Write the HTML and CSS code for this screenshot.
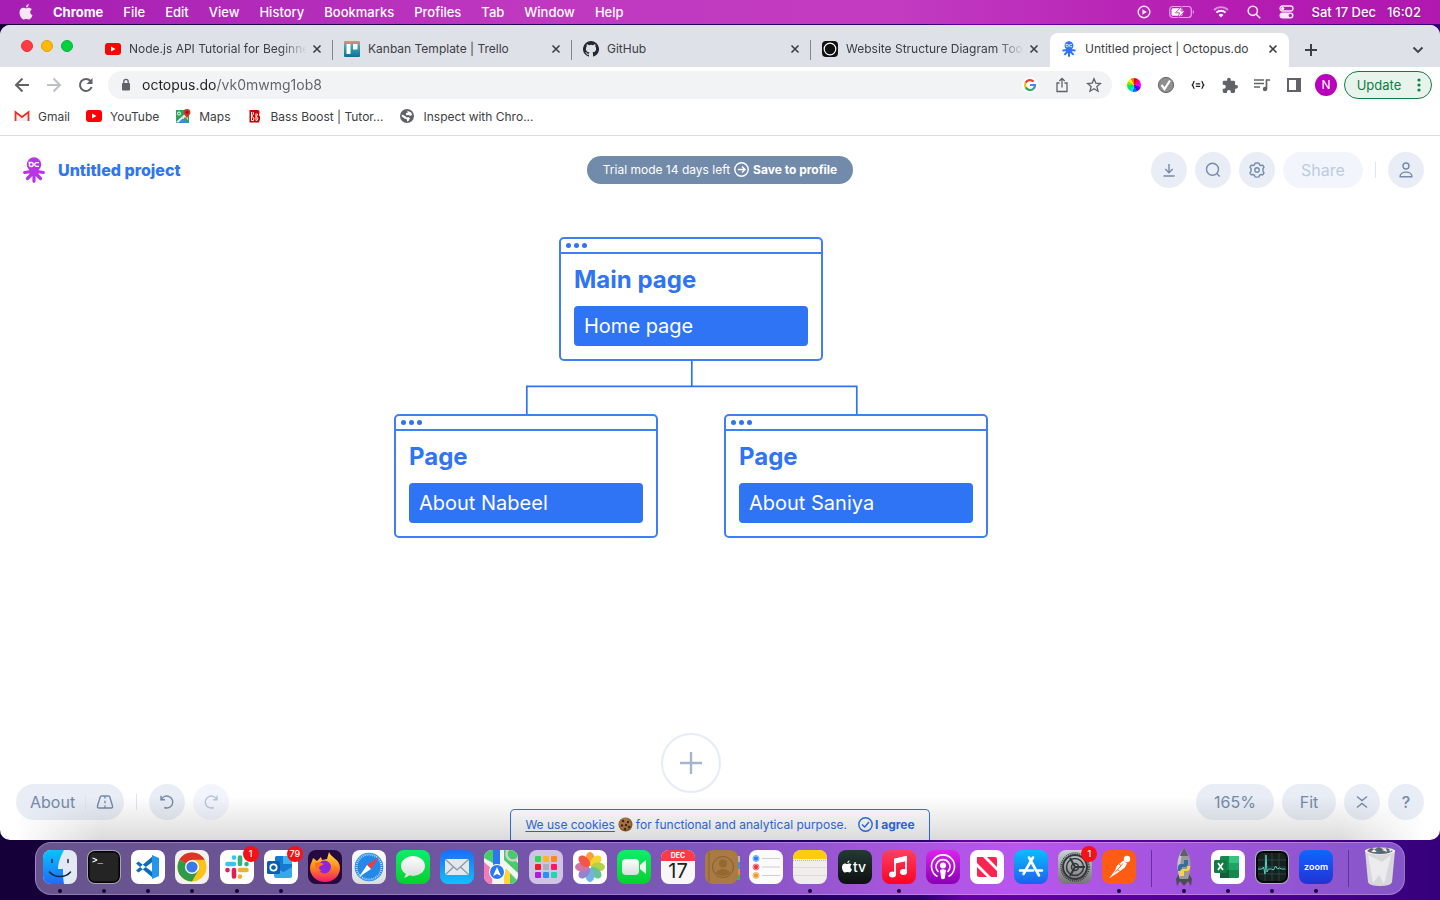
FILE: index.html
```html
<!DOCTYPE html>
<html lang="en">
<head>
<meta charset="utf-8">
<meta name="viewport" content="width=device-width, initial-scale=1">
<title>Untitled project | Octopus.do</title>
<link rel="stylesheet" href="styles.css">
</head>
<body>
<svg width="0" height="0" class="defs" aria-hidden="true">
  <defs>
    <linearGradient id="gGreen" x2="0" y2="1"><stop stop-color="#0bef6b"/><stop offset="1" stop-color="#06cf2c"/></linearGradient>
    <linearGradient id="gBlue" x2="0" y2="1"><stop stop-color="#1d6cf3"/><stop offset="1" stop-color="#12c0fb"/></linearGradient>
    <linearGradient id="gStore" x2="0" y2="1"><stop stop-color="#08bdfb"/><stop offset="1" stop-color="#1d60ee"/></linearGradient>
    <linearGradient id="gFinder" x2="0" y2="1"><stop stop-color="#06c4fc"/><stop offset="1" stop-color="#1f6bfa"/></linearGradient>
    <linearGradient id="gRed" x2="0" y2="1"><stop stop-color="#fb4060"/><stop offset="1" stop-color="#fb0324"/></linearGradient>
    <linearGradient id="gPod" x2="0" y2="1"><stop stop-color="#dd22ee"/><stop offset="1" stop-color="#8b00b4"/></linearGradient>
    <linearGradient id="gTv" x2="0" y2="1"><stop stop-color="#233a35"/><stop offset="1" stop-color="#0b1010"/></linearGradient>
    <linearGradient id="gGray" x2="0" y2="1"><stop stop-color="#c9d3d3"/><stop offset="1" stop-color="#747474"/></linearGradient>
    <linearGradient id="gLight" x2="0" y2="1"><stop stop-color="#ffffff"/><stop offset="1" stop-color="#d9dedb"/></linearGradient>
    <linearGradient id="gZoom" x2="0" y2="1"><stop stop-color="#0d67ff"/><stop offset="1" stop-color="#2232d4"/></linearGradient>
    <linearGradient id="gTrello" x2="0" y2="1"><stop stop-color="#f28a6c"/><stop offset=".35" stop-color="#3aa5b7"/><stop offset="1" stop-color="#0b6f95"/></linearGradient>
    <linearGradient id="gFox" x2="0" y2="1"><stop stop-color="#ffe03a"/><stop offset=".5" stop-color="#ff8a1c"/><stop offset="1" stop-color="#f5156c"/></linearGradient>
    <symbol id="close" viewBox="0 0 16 16"><path d="M4.500 4.500l7 7M11.500 4.500l-7 7" stroke="#3c4043" stroke-width="1.600" fill="none"/></symbol>
    <symbol id="youtube" viewBox="0 0 16 16"><rect y="2" width="16" height="12" rx="3" fill="#f00"/><path d="M6 5.500v5l4.500-2.500z" fill="#fff"/></symbol>
    <symbol id="octopus" viewBox="0 0 22 26">
      <circle cx="11" cy="7.500" r="7.200"/><path d="M6.500 11h9v8h-9z"/>
      <path d="M11 15v9.200M8 14.500l-6.300 1M14 14.500l6.300 1M9 17l-4.500 4.500M13 17l4.500 4.500" stroke="currentColor" stroke-width="3.200" stroke-linecap="round"/>
      <g fill="none" stroke="#fff" stroke-width="1.300"><circle cx="8.300" cy="7.500" r="2"/><path d="M16 5.700h-2.500a1.800 1.800 0 1 0 0 3.600H16M5.500 5.500h2"/></g>
    </symbol>
  </defs>
</svg>

<header class="menubar">
  <nav class="menus" aria-label="Menu bar">
    <button class="menu apple" aria-label="Apple menu"><svg width="14" height="16" viewBox="0 0 14 16" fill="#f7e6f7"><path d="M9.800 0c.2 1.600-1.100 3.400-2.800 3.500C6.800 1.900 8.200.3 9.800 0zM7 4.500c.8 0 1.600-.7 2.900-.7 1.200 0 2.300.6 3 1.500-2.500 1.500-2.100 4.900.6 5.900-.6 1.700-2 4.300-3.400 4.300-1.100 0-1.500-.6-2.800-.6s-1.700.6-2.700.6C2.800 15.500.5 11.600.5 8.500c0-3 1.900-4.700 3.800-4.700 1.200 0 2 .7 2.700.7z"/></svg></button>
    <button class="menu app">Chrome</button><button class="menu">File</button><button class="menu">Edit</button><button class="menu">View</button><button class="menu">History</button><button class="menu">Bookmarks</button><button class="menu">Profiles</button><button class="menu">Tab</button><button class="menu">Window</button><button class="menu">Help</button>
  </nav>
  <div class="status">
    <svg width="14" height="14" viewBox="0 0 14 14"><circle cx="7" cy="7" r="5.800" fill="none" stroke="#fbe9fb" stroke-width="1.400"/><path d="M5.400 4.300v5.400L9.800 7z" fill="#fbe9fb"/></svg>
    <svg width="26" height="14" viewBox="0 0 26 14"><rect x=".8" y="1.500" width="21.500" height="11" rx="3" fill="none" stroke="#e7a5e6" stroke-width="1.200"/><rect x="2.500" y="3.200" width="11" height="7.600" rx="1.500" fill="#fff"/><path d="M23.800 5v4c1.500-.6 1.500-3.400 0-4z" fill="#e7a5e6"/><path d="M13 .8L6.500 7.800h4L9 13.200l7-7.200h-4z" fill="#fff" stroke="#bd2cbb" stroke-width=".8"/></svg>
    <svg width="16" height="12" viewBox="0 0 16 12" fill="none" stroke-width="1.900"><path d="M1 4a10 10 0 0 1 14 0" stroke="#dc8fda"/><path d="M3.400 6.600a6.600 6.600 0 0 1 9.200 0" stroke="#fff"/><path d="M5.600 9a3.500 3.500 0 0 1 4.800 0L8 11.500z" fill="#fff"/></svg>
    <svg width="14" height="14" viewBox="0 0 14 14" fill="none" stroke="#fbe9fb" stroke-width="1.600"><circle cx="5.800" cy="5.800" r="4.600"/><path d="M9.200 9.200l4 4"/></svg>
    <svg width="15" height="14" viewBox="0 0 15 14"><rect x="1" y="1" width="13" height="5" rx="2.500" fill="none" stroke="#fbe9fb" stroke-width="1.300"/><circle cx="3.700" cy="3.500" r="1.600" fill="#fff"/><rect x=".5" y="7.500" width="14" height="6" rx="3" fill="#fbe9fb"/><circle cx="11.300" cy="10.500" r="1.700" fill="#b71fb6"/></svg>
    <time class="clock"><span>Sat 17 Dec</span><span>16:02</span></time>
  </div>
</header>

<main class="window">
  <div class="tabstrip">
    <div class="lights"><button class="light red" aria-label="Close window"></button><button class="light yellow" aria-label="Minimise"></button><button class="light green" aria-label="Zoom"></button></div>
    <div class="tab"><svg class="fav"><use href="#youtube"/></svg><span class="tab-title fade">Node.js API Tutorial for Beginne</span><button class="tab-close" aria-label="Close tab"><svg><use href="#close"/></svg></button></div>
    <div class="tab"><svg class="fav" viewBox="0 0 16 16"><rect width="16" height="16" rx="1" fill="url(#gTrello)"/><path d="M2.500 3h4v10h-4zM9 3h4.500v5.500H9z" fill="#fff"/></svg><span class="tab-title">Kanban Template | Trello</span><button class="tab-close" aria-label="Close tab"><svg><use href="#close"/></svg></button></div>
    <div class="tab"><svg class="fav" viewBox="0 0 16 16" fill="#24292f"><path d="M8 0a8 8 0 0 0-2.530 15.590c.4.070.55-.17.550-.380v-1.490c-2.230.48-2.690-.95-2.690-.95-.36-.92-.89-1.170-.89-1.170-.73-.5.050-.49.050-.49.810.06 1.230.83 1.230.83.720 1.230 1.870.870 2.330.660.070-.52.280-.87.510-1.070-1.780-.2-3.640-.89-3.640-3.950 0-.87.310-1.590.820-2.150-.08-.2-.36-1.020.080-2.120 0 0 .67-.21 2.200.820a7.600 7.600 0 0 1 4 0c1.530-1.040 2.200-.82 2.200-.82.440 1.100.160 1.920.080 2.120.510.560.820 1.270.820 2.150 0 3.070-1.870 3.750-3.650 3.950.290.250.540.730.540 1.480v2.200c0 .210.150.460.550.380A8 8 0 0 0 8 0z"/></svg><span class="tab-title">GitHub</span><button class="tab-close" aria-label="Close tab"><svg><use href="#close"/></svg></button></div>
    <div class="tab last"><svg class="fav" viewBox="0 0 16 16"><rect width="16" height="16" rx="4" fill="#111"/><circle cx="8" cy="8" r="5.800" fill="#111" stroke="#fff" stroke-width="1.200"/></svg><span class="tab-title fade">Website Structure Diagram Too</span><button class="tab-close" aria-label="Close tab"><svg><use href="#close"/></svg></button></div>
    <div class="tab active"><svg class="fav blue"><use href="#octopus"/></svg><span class="tab-title">Untitled project | Octopus.do</span><button class="tab-close" aria-label="Close tab"><svg><use href="#close"/></svg></button></div>
    <button class="newtab" aria-label="New tab"><svg width="12" height="12" viewBox="0 0 12 12"><path d="M6 0v12M0 6h12" stroke="#3c4043" stroke-width="2"/></svg></button>
    <button class="tabsearch" aria-label="Search tabs"><svg width="12" height="8" viewBox="0 0 12 8"><path d="M1.500 1.500L6 6l4.500-4.500" fill="none" stroke="#3c4043" stroke-width="1.800"/></svg></button>
  </div>

  <div class="toolbar">
    <button class="tool" aria-label="Back"><svg width="16" height="16" viewBox="0 0 16 16" fill="none" stroke="#5f6368" stroke-width="2"><path d="M15 8H2M8.500 1.500L2 8l6.500 6.500"/></svg></button>
    <button class="tool" aria-label="Forward"><svg width="16" height="16" viewBox="0 0 16 16" fill="none" stroke="#bdc1c6" stroke-width="2"><path d="M1 8h13M7.500 1.500L14 8l-6.500 6.500"/></svg></button>
    <button class="tool" aria-label="Reload"><svg width="16" height="16" viewBox="0 0 16 16"><path d="M13.600 10A6 6 0 1 1 12.500 4" fill="none" stroke="#5f6368" stroke-width="2"/><path d="M14.500 1v6h-6z" fill="#5f6368"/></svg></button>
    <div class="omnibox">
      <svg width="12" height="14" viewBox="0 0 12 14"><rect x="2" y="5" width="8" height="7.500" rx="1" fill="#5f6368"/><path d="M3.800 6V3.500a2.200 2.200 0 0 1 4.400 0V6" fill="none" stroke="#5f6368" stroke-width="1.300"/></svg>
      <input class="url" type="text" aria-label="Address" value="octopus.do/vk0mwmg1ob8">
      <button class="tool" aria-label="Google"><svg width="16" height="16" viewBox="0 0 16 16"><circle cx="8" cy="8" r="8" fill="#fff"/><g fill="none" stroke-width="2.200"><path d="M11.600 4.600A5 5 0 0 0 3.600 5.700" stroke="#ea4335"/><path d="M3.600 5.700a5 5 0 0 0 0 4.600" stroke="#fbbc05"/><path d="M3.600 10.300a5 5 0 0 0 7.700 1.500" stroke="#34a853"/><path d="M11.300 11.800A5 5 0 0 0 13 8H8" stroke="#4285f4"/></g></svg></button>
      <button class="tool" aria-label="Share page"><svg width="14" height="16" viewBox="0 0 14 16" fill="none" stroke="#5f6368" stroke-width="1.300"><path d="M4.500 6H2v8.500h10V6H9.500M7 10.500v-9M4.300 4L7 1.300 9.700 4"/></svg></button>
      <button class="tool" aria-label="Bookmark"><svg width="16" height="16" viewBox="0 0 16 16" fill="none" stroke="#5f6368" stroke-width="1.300"><path d="M8 1.800l1.800 4.300 4.700.4-3.600 3.100 1.100 4.600L8 11.700l-4 2.500 1.100-4.600-3.600-3.100 4.700-.4z"/></svg></button>
    </div>
    <button class="tool" aria-label="Color picker"><span class="wheel"></span></button>
    <button class="tool" aria-label="Checker"><svg width="18" height="18" viewBox="0 0 18 18"><circle cx="9" cy="9" r="7.600" fill="#8f8f8f" stroke="#666"/><path d="M4.500 9l3 4L13 4.500" fill="none" stroke="#fff" stroke-width="2.200"/></svg></button>
    <button class="tool" aria-label="JSON viewer"><svg width="14" height="10" viewBox="0 0 14 10" fill="none" stroke="#222" stroke-width="1.300"><path d="M3.500 1.500C1.500 1.500 3.200 5 .7 5c2.500 0 .8 3.500 2.800 3.500M10.500 1.500c2 0 .3 3.500 2.800 3.500-2.500 0-.8 3.500-2.800 3.500M4.800 3.800h4.400M4.800 6.300h4.400"/></svg></button>
    <button class="tool" aria-label="Extensions"><svg width="16" height="16" viewBox="1 0 22 22" fill="#5f6368"><path d="M20.500 11H19V7c0-1.100-.9-2-2-2h-4V3.500a2.500 2.500 0 0 0-5 0V5H4c-1.100 0-2 .9-2 2v3.800h1.500a2.700 2.700 0 0 1 0 5.400H2V20c0 1.100.9 2 2 2h3.800v-1.500a2.700 2.700 0 0 1 5.400 0V22H17c1.100 0 2-.9 2-2v-4h1.500a2.500 2.500 0 0 0 0-5z"/></svg></button>
    <button class="tool" aria-label="Media"><svg width="16" height="14" viewBox="0 0 16 14" fill="none" stroke="#5f6368" stroke-width="1.700"><path d="M0 2h10M0 5.500h10M0 9h6M12.500 11V2H16"/><circle cx="11" cy="11" r="2.200" fill="#5f6368" stroke="none"/></svg></button>
    <button class="tool" aria-label="Side panel"><svg width="14" height="14" viewBox="0 0 14 14"><path d="M1 1h12v12H1z" fill="none" stroke="#5f6368" stroke-width="2"/><path d="M9 1h4v12H9z" fill="#5f6368"/></svg></button>
    <button class="tool" aria-label="Profile"><span class="avatar">N</span></button>
    <button class="update">Update<svg width="4" height="14" viewBox="0 0 4 14" fill="#0b8043"><circle cx="2" cy="2" r="1.600"/><circle cx="2" cy="7" r="1.600"/><circle cx="2" cy="12" r="1.600"/></svg></button>
  </div>

  <nav class="bookmarks" aria-label="Bookmarks">
    <a href="#"><svg viewBox="0 0 16 16"><path d="M2 4v9h12V4L8 9z" fill="#eee"/><path d="M1.500 13V4L8 9l6.500-5v9" fill="none" stroke="#e0352b" stroke-width="1.800"/></svg>Gmail</a>
    <a href="#"><svg><use href="#youtube"/></svg>YouTube</a>
    <a href="#"><svg viewBox="0 0 16 16"><rect x="1" y="2" width="13" height="13" fill="#2da45a"/><path d="M1 14L13 3v9l-3-3-5 6z" fill="#e9e9e9"/><path d="M3 15l4.500-4.500L12 15z" fill="#4285f4"/><path d="M12 1a3.400 3.400 0 0 0-3.400 3.400C8.600 7 11.400 7.500 12 11c.6-3.500 3.400-4 3.400-6.600A3.400 3.400 0 0 0 12 1z" fill="#db2d27"/><circle cx="12" cy="4.300" r="1.200" fill="#7c1410"/><circle cx="4" cy="5.500" r="1.500" fill="none" stroke="#fff"/></svg>Maps</a>
    <a href="#"><svg viewBox="0 0 16 16"><path d="M2.500 2h8q2.500 0 2 3l-.5 2q1.500 2 1 4l-1 3.500h-9.500z" fill="#c00"/><path d="M4.500 4v8.500h2q2-2.500-2-4.500 3.500-1.500 1.500-4M9 5.500v7h1q2.500-2.500-1-4 3-1.500 1-3" fill="none" stroke="#fff" stroke-width="1"/></svg>Bass Boost | Tutor...</a>
    <a href="#"><svg viewBox="0 0 16 16"><circle cx="8" cy="8" r="7" fill="#5f6368"/><path d="M2.800 6.500l3.400 1.500 1.300 1.500 2-.5 1.500 1.500-1.500 2.500-1.500.5v-2l-2.500-1-2.700-2zM8 2.800l4 1.500 1.200 2.700-2 .7-2-.7-2 .3L7 5l2-.5z" fill="#fff"/></svg>Inspect with Chro...</a>
  </nav>

  <section class="page">
    <header class="page-head">
      <div class="brand"><svg width="22" height="26" class="logo"><use href="#octopus"/></svg><h1>Untitled project</h1></div>
      <button class="trial"><span>Trial mode 14 days left</span><svg width="15" height="15" viewBox="0 0 15 15" fill="none" stroke="#fff" stroke-width="1.400"><circle cx="7.500" cy="7.500" r="6.700"/><path d="M3.800 7.500h7M8 4.500l3 3-3 3"/></svg><b>Save to profile</b></button>
      <div class="actions">
        <button class="pill round" aria-label="Download"><svg viewBox="0 0 16 16"><path d="M8 2v8.500M4.300 7L8 10.700 11.700 7M2.500 14h11"/></svg></button>
        <button class="pill round" aria-label="Search"><svg viewBox="0 0 16 16"><circle cx="7.500" cy="7.300" r="6"/><path d="M12 11.800l2.700 2.700"/></svg></button>
        <button class="pill round" aria-label="Settings"><svg viewBox="0 0 16 16"><path d="M8 .9l1.900.2.700 1.800 1.300.6 1.800-.4 1.300 2-1 1.600v2.600l1 1.600-1.300 2-1.800-.4-1.300.6-.7 1.800-1.900.2-1.900-.2-.7-1.800-1.300-.6-1.800.4-1.300-2 1-1.600V6.700L1 5.100l1.300-2 1.800.4 1.300-.6.700-1.800z" stroke-linejoin="round"/><circle cx="8" cy="8" r="2.200"/></svg></button>
        <button class="pill share" disabled>Share</button>
        <span class="rule"></span>
        <button class="pill round" aria-label="Account"><svg viewBox="0 0 16 16"><circle cx="8" cy="4" r="3"/><path d="M2 14.800c0-6.200 12-6.200 12 0z" stroke-linejoin="round"/></svg></button>
      </div>
    </header>

    <div class="canvas">
      <div class="diagram">
        <svg class="links" width="594" height="301" viewBox="0 0 594 301" fill="none" stroke="#2f74f4" stroke-width="1.700"><path d="M297.800 124v25.500M132.800 177v-27.700h330V177"/></svg>
        <article class="node root"><div class="node-bar"><i></i><i></i><i></i></div><h2>Main page</h2><p>Home page</p></article>
        <article class="node left"><div class="node-bar"><i></i><i></i><i></i></div><h2>Page</h2><p>About Nabeel</p></article>
        <article class="node right"><div class="node-bar"><i></i><i></i><i></i></div><h2>Page</h2><p>About Saniya</p></article>
      </div>
    </div>

    <footer class="page-foot">
      <div class="group">
        <div class="pill about"><button>About</button><span class="rule"></span><button aria-label="Roadmap"><svg viewBox="0 0 18 16"><path d="M5.500 2h7q1 0 1.300 1l2.700 9q.4 2-1.500 2H3q-1.900 0-1.500-2l2.700-9q.3-1 1.300-1zM9 2v2.500M9 6.800v2.500M9 11.500V14"/></svg></button></div>
        <span class="rule"></span>
        <button class="pill round" aria-label="Undo"><svg viewBox="0 0 16 16"><path d="M2 1.800v4h4M2.300 5.600a6 6 0 1 1 3 7.900"/></svg></button>
        <button class="pill round faint" aria-label="Redo" disabled><svg viewBox="0 0 16 16"><path d="M14 1.800v4h-4M13.700 5.600a6 6 0 1 0-3 7.900"/></svg></button>
      </div>
      <div class="group">
        <button class="pill zoom">165%</button>
        <button class="pill fit">Fit</button>
        <button class="pill round" aria-label="Collapse"><svg viewBox="0 0 16 16"><path d="M3 2.500l5 4 5-4M3 13.500l5-4 5 4"/></svg></button>
        <button class="pill round help" aria-label="Help">?</button>
      </div>
    </footer>
    <button class="add" aria-label="Add page"><svg width="22" height="22" viewBox="0 0 22 22"><path d="M11 0v22M0 11h22" stroke="#a3b5cf" stroke-width="2.400"/></svg></button>
    <div class="cookies">
      <a href="#">We use cookies</a>
      <svg width="15" height="15" viewBox="0 0 15 15"><circle cx="7.500" cy="7.500" r="7" fill="#8f5c30"/><circle cx="7" cy="7" r="6" fill="#b47e4a"/><g fill="#4c2a14"><circle cx="5" cy="4" r="1.300"/><circle cx="10" cy="5" r="1.200"/><circle cx="4" cy="8.500" r="1.200"/><circle cx="8" cy="8" r="1.200"/><circle cx="11" cy="10" r="1.300"/><circle cx="7" cy="12" r="1.200"/></g></svg>
      <span>for functional and analytical purpose.</span>
      <button class="agree"><svg width="15" height="15" viewBox="0 0 15 15" fill="none" stroke="#2f6fe6" stroke-width="1.400"><circle cx="7.500" cy="7.500" r="6.700"/><path d="M4 7.500L6.700 10 11 5"/></svg>I agree</button>
    </div>
  </section>
</main>

<nav class="dock" aria-label="Dock">
  <a class="slot run" href="#" aria-label="Finder"><svg viewBox="0 0 34 34"><rect width="34" height="34" rx="8" fill="#e3e9f2"/><path d="M8 0h13c-3 6-6 12-6 19h5c0 5 0 10 1 15H8a8 8 0 0 1-8-8V8a8 8 0 0 1 8-8z" fill="url(#gFinder)"/><path d="M9 9.500v3M25 9.500v3M6.500 22c5 6 16 6 21 0" stroke="#14283f" stroke-width="1.500" fill="none" stroke-linecap="round"/></svg></a>
  <a class="slot run" href="#" aria-label="Terminal"><svg viewBox="0 0 34 34"><rect width="34" height="34" rx="8" fill="#a5a5b1"/><rect x="1" y="1" width="32" height="32" rx="7" fill="#000"/><rect x="2.500" y="2.500" width="29" height="29" rx="5" fill="#242424"/><text x="5" y="13" class="t-mono">&gt;_</text></svg></a>
  <a class="slot run" href="#" aria-label="VS Code"><svg viewBox="0 0 34 34"><rect width="34" height="34" rx="8" fill="#fff"/><path d="M5 13.500l2.500-2L22 22.500v5.500zM5 20.500l2.500 2L22 11.500V6z" fill="#0b6cb8"/><path d="M21 5l7 3v18l-7 3z" fill="#2196ec"/></svg></a>
  <a class="slot run" href="#" aria-label="Chrome"><svg viewBox="0 0 34 34"><rect width="34" height="34" rx="8" fill="#f3f0f0"/><circle cx="17" cy="17" r="14.500" fill="#fbc217"/><path d="M17 17L4.400 9.800A14.500 14.500 0 0 1 29.600 9.800H17z" fill="#dc3427"/><path d="M17 17l6.300 3.600L17 31.500A14.500 14.500 0 0 1 4.400 9.800z" fill="#2e9b48"/><circle cx="17" cy="17" r="7" fill="#fff"/><circle cx="17" cy="17" r="5.600" fill="#3b79e8"/></svg></a>
  <a class="slot run" href="#" aria-label="Slack"><svg viewBox="0 0 34 34"><rect width="34" height="34" rx="8" fill="#fff"/><g stroke-width="4.600" stroke-linecap="round"><path d="M14 7.500v.1M7.500 14H14" stroke="#36c5f0"/><path d="M20 7.500V14M26.500 14v.1" stroke="#2eb67d"/><path d="M20 20h6.500M20 26.500v.1" stroke="#ecb22e"/><path d="M14 20v6.500M7.500 20v.1" stroke="#e01e5a"/></g></svg><b class="badge">1</b></a>
  <a class="slot run" href="#" aria-label="Outlook"><svg viewBox="0 0 34 34"><rect width="34" height="34" rx="8" fill="#fff"/><rect x="11" y="6" width="17" height="21" rx="1.500" fill="#1479d3"/><path d="M19 6h9v8h-9z" fill="#3bb5f0"/><path d="M10 17l9.500 5 8.500-5v9q0 2-2 2H12q-2 0-2-2z" fill="#36a9ea"/><rect x="3" y="11" width="13" height="13" rx="1.500" fill="#0b5db4"/><circle cx="9.500" cy="17.500" r="3.200" fill="none" stroke="#fff" stroke-width="1.700"/></svg><b class="badge">79</b></a>
  <a class="slot" href="#" aria-label="Firefox"><svg viewBox="0 0 34 34"><rect width="34" height="34" rx="8" fill="#25093f"/><path d="M5 8l4 3 4-4 1 3 5-1 2-7c2 6 11 7 11 16A15 14 0 0 1 2 18C2 14 4 12 5 8z" fill="url(#gFox)"/><circle cx="16.500" cy="17" r="6.500" fill="#8e26dc"/><path d="M7 13c4-2 7 0 9 1l-5 3c0 2 1 3 3 4-4 1-8-3-7-8z" fill="#ff711b"/></svg></a>
  <a class="slot" href="#" aria-label="Safari"><svg viewBox="0 0 34 34"><rect width="34" height="34" rx="8" fill="url(#gLight)"/><circle cx="17" cy="17" r="14.300" fill="#2388e8"/><circle cx="17" cy="17" r="12.500" fill="none" stroke="#b7dcfb" stroke-width="2" stroke-dasharray="1 1"/><path d="M27 7L15 15l4 4z" fill="#f23b3a"/><path d="M7 27l8-12 4 4z" fill="#fff"/></svg></a>
  <a class="slot" href="#" aria-label="Messages"><svg viewBox="0 0 34 34"><rect width="34" height="34" rx="8" fill="url(#gGreen)"/><ellipse cx="17" cy="16" rx="12" ry="10" fill="url(#gLight)"/><path d="M10 22q0 4-2 5.500 4-.5 6-3z" fill="#e2e8e5"/></svg></a>
  <a class="slot" href="#" aria-label="Mail"><svg viewBox="0 0 34 34"><rect width="34" height="34" rx="8" fill="url(#gBlue)"/><rect x="5" y="9" width="24" height="16" rx="2" fill="#e4e8ed"/><path d="M5.500 9.500L17 20 28.500 9.500M5.500 24.500l8-7.500M28.500 24.500l-8-7.500" fill="none" stroke="#8996a5" stroke-width="1.200"/></svg></a>
  <a class="slot" href="#" aria-label="Maps"><svg viewBox="0 0 34 34" class="clip"><rect width="34" height="34" fill="#f4f4f2"/><path d="M0 0h9v13L0 8zM21 0l13 13v10L20 10V0z" fill="#46cc68"/><path d="M22 19l12 12v3H22z" fill="#51cd6d"/><path d="M0 12l9 8-1 14H0z" fill="#f27db6"/><path d="M22 19l4 4v11h-6V22z" fill="#fed638"/><path d="M9 0h7v18H9z" fill="#2879f3"/><circle cx="29" cy="4" r="6.500" fill="#46cc68" stroke="#cbd2ce" stroke-width="2.500"/><circle cx="13" cy="22" r="8" fill="#fff"/><circle cx="13" cy="22" r="7" fill="#2879f3"/><path d="M13 17l4 9-4-2-4 2z" fill="#fff"/></svg></a>
  <a class="slot" href="#" aria-label="Launchpad"><svg viewBox="0 0 34 34"><rect width="34" height="34" rx="8" fill="#cfc4e4"/><g><rect x="6" y="6" width="6" height="6" rx="1" fill="#2edb50"/><rect x="14" y="6" width="6" height="6" rx="1" fill="#fdb51e"/><rect x="22" y="6" width="6" height="6" rx="1" fill="#fc8a14"/><rect x="6" y="14" width="6" height="6" rx="1" fill="#e91d2c"/><rect x="14" y="14" width="6" height="6" rx="1" fill="#aab0b8"/><rect x="22" y="14" width="6" height="6" rx="1" fill="#fa1765"/><rect x="6" y="22" width="6" height="6" rx="1" fill="#b11ae0"/><rect x="14" y="22" width="6" height="6" rx="1" fill="#2395f5"/><rect x="22" y="22" width="6" height="6" rx="1" fill="#1ed8b0"/></g></svg></a>
  <a class="slot" href="#" aria-label="Photos"><svg viewBox="0 0 34 34"><rect width="34" height="34" rx="8" fill="#fff"/><g opacity=".9"><ellipse cx="17" cy="9" rx="4.500" ry="7" fill="#fb9620"/><ellipse cx="17" cy="9" rx="4.500" ry="7" fill="#f3d21c" transform="rotate(45 17 17)"/><ellipse cx="17" cy="9" rx="4.500" ry="7" fill="#a9cd36" transform="rotate(90 17 17)"/><ellipse cx="17" cy="9" rx="4.500" ry="7" fill="#59bd87" transform="rotate(135 17 17)"/><ellipse cx="17" cy="9" rx="4.500" ry="7" fill="#61ace3" transform="rotate(180 17 17)"/><ellipse cx="17" cy="9" rx="4.500" ry="7" fill="#8977c5" transform="rotate(225 17 17)"/><ellipse cx="17" cy="9" rx="4.500" ry="7" fill="#cc659f" transform="rotate(270 17 17)"/><ellipse cx="17" cy="9" rx="4.500" ry="7" fill="#f34334" transform="rotate(315 17 17)"/></g></svg></a>
  <a class="slot" href="#" aria-label="FaceTime"><svg viewBox="0 0 34 34"><rect width="34" height="34" rx="8" fill="url(#gGreen)"/><rect x="5" y="9" width="17" height="16" rx="4" fill="url(#gLight)"/><path d="M23 15l6-5v14l-6-5z" fill="#e9f5ed"/></svg></a>
  <a class="slot" href="#" aria-label="Calendar"><svg viewBox="0 0 34 34"><rect width="34" height="34" rx="8" fill="#f7f7f7"/><path d="M8 0h18a8 8 0 0 1 8 8v3H0V8a8 8 0 0 1 8-8z" fill="#fb3b45"/><text x="17" y="8" class="t-month">DEC</text><text x="17" y="28" class="t-day">17</text></svg></a>
  <a class="slot" href="#" aria-label="Contacts"><svg viewBox="0 0 34 34"><path d="M27 6h8v6h-8z" fill="#b7b7b7"/><path d="M27 12h8v7h-8z" fill="#3a94d0"/><path d="M27 19h8v6h-8z" fill="#e98c2c"/><path d="M27 25h8v5h-8z" fill="#39b45b"/><rect width="33" height="34" rx="8" fill="#a97a43"/><path d="M4 2v30" stroke="#8d632f"/><circle cx="18" cy="17" r="10.500" fill="none" stroke="#85602f"/><circle cx="18" cy="13.500" r="4" fill="#93692f"/><path d="M10.500 23q7.500-8 15 0-7 6-15 0z" fill="#93692f"/></svg></a>
  <a class="slot" href="#" aria-label="Reminders"><svg viewBox="0 0 34 34"><rect width="34" height="34" rx="8" fill="#fbfbfb"/><path d="M13 8.500h18M13 17h18M13 25.500h18" stroke="#cfcfcf"/><g stroke-width=".7" fill="none"><circle cx="7" cy="8.500" r="3" stroke="#2582f6"/><circle cx="7" cy="17" r="3" stroke="#f1323f"/><circle cx="7" cy="25.500" r="3" stroke="#f39427"/></g><circle cx="7" cy="8.500" r="2.200" fill="#2582f6"/><circle cx="7" cy="17" r="2.200" fill="#f1323f"/><circle cx="7" cy="25.500" r="2.200" fill="#f39427"/></svg></a>
  <a class="slot run" href="#" aria-label="Notes"><svg viewBox="0 0 34 34"><rect width="34" height="34" rx="8" fill="#f0eeec"/><path d="M8 0h18a8 8 0 0 1 8 8v1H0V8a8 8 0 0 1 8-8z" fill="#fdcc11"/><path d="M0 10.500h34" stroke="#a9a5a0" stroke-width=".8" stroke-dasharray="1 1"/><path d="M0 17.500h34M0 25.500h34" stroke="#dedad6"/></svg></a>
  <a class="slot" href="#" aria-label="TV"><svg viewBox="0 0 34 34"><rect width="34" height="34" rx="8" fill="url(#gTv)"/><path d="M11.500 10.500c.1 1.300-1 2.600-2.300 2.600 0-1.300 1-2.400 2.300-2.600zM9 14c.7 0 1.300-.5 2.300-.5 1 0 1.800.4 2.400 1.100-2 1.300-1.700 3.900.3 4.800-.5 1.200-1.500 3.100-2.700 3.100-.9 0-1.200-.4-2.100-.4s-1.300.4-2.200.4C5.500 22.500 4 19.500 4 17.200c0-2.300 1.400-3.700 3-3.700.9 0 1.300.5 2 .5z" fill="#fff"/><text x="15" y="22" class="t-tv">tv</text></svg></a>
  <a class="slot run" href="#" aria-label="Music"><svg viewBox="0 0 34 34"><rect width="34" height="34" rx="8" fill="url(#gRed)"/><path d="M13 24V9.500L24 7v14.500" fill="none" stroke="#fff" stroke-width="1.800"/><path d="M12.100 8.700L24.900 6v5L12.100 13.700z" fill="#fff"/><ellipse cx="10.500" cy="24.500" rx="3.500" ry="3" fill="#fff"/><ellipse cx="21.500" cy="22" rx="3.500" ry="3" fill="#fff"/></svg></a>
  <a class="slot" href="#" aria-label="Podcasts"><svg viewBox="0 0 34 34"><rect width="34" height="34" rx="8" fill="url(#gPod)"/><g fill="none" stroke="#fff" stroke-width="1.600"><path d="M11.500 26.500A11.500 11.500 0 1 1 22.500 26.500"/><path d="M12.500 22A7 7 0 1 1 21.500 22"/></g><circle cx="17" cy="15.500" r="3" fill="#fff"/><path d="M14 20q3-1.500 6 0l-1.200 8.500q-1.800 1.500-3.600 0z" fill="#fff"/></svg></a>
  <a class="slot" href="#" aria-label="News"><svg viewBox="0 0 34 34"><rect width="34" height="34" rx="8" fill="#fff"/><path d="M7 7h6l14 14v6h-6L7 13zM17 7h8q2 0 2 2v8zM7 17v8q0 2 2 2h8z" fill="#f7254f"/></svg></a>
  <a class="slot" href="#" aria-label="App Store"><svg viewBox="0 0 34 34"><rect width="34" height="34" rx="8" fill="url(#gStore)"/><path d="M19 7.500L9.500 24M15 7.500L25 25.500M6 20.500h13M23 20.500h5" stroke="#fff" stroke-width="2.600" stroke-linecap="round"/></svg></a>
  <a class="slot" href="#" aria-label="Settings"><svg viewBox="0 0 34 34"><rect width="34" height="34" rx="8" fill="url(#gGray)"/><g fill="none" stroke="#34373a"><circle cx="17" cy="17" r="14" stroke-width="1.500" stroke-dasharray="1 1"/><circle cx="17" cy="17" r="12" stroke-width="2"/><circle cx="17" cy="17" r="8.500" stroke-width="1.500"/><path d="M17 17h10M17 17l-5-9M17 17l-5 9" stroke-width="2"/><circle cx="17" cy="17" r="3.500" stroke-width="1.500"/></g></svg><b class="badge">1</b></a>
  <a class="slot run" href="#" aria-label="Postman"><svg viewBox="0 0 34 34"><rect width="34" height="34" rx="8" fill="#fe5b13"/><circle cx="25" cy="9" r="3.200" fill="#fff"/><path d="M21.500 10.500l3.500 3-2 4-7 5-9 6 6-8 2-5z" fill="#fff"/><path d="M21 13.500l-8 9M17 14l2 1.500M15.500 20l2 1" stroke="#fe5b13" stroke-width=".9"/></svg></a>
  <span class="dock-rule"></span>
  <a class="slot run" href="#" aria-label="Python Launcher"><svg viewBox="0 0 34 34"><path d="M12 24l-3 5 1 7 3-5 4 5 4-5 3 5 1-7-3-5z" fill="#4b4b52"/><path d="M17-2c-9 10-7 22-4 31h8c3-9 5-21-4-31z" fill="#98989f"/><path d="M17-2c-3 7-4 14-4 31-3-9-5-21 4-31z" fill="#c8c8cb"/><path d="M17-2c-2 3-3.500 5-4 8h8c-.5-3-2-5-4-8z" fill="#60606a"/><path d="M11 17q0-3 3-3h3v-4h4v4q0 3-3 3h-3v4h-4z" fill="#336fa0"/><path d="M23 17q0 4-3 4h-3v5h-4v-4q0-3 3-3h4v-3h3z" fill="#fbd33f"/></svg></a>
  <a class="slot run" href="#" aria-label="Excel"><svg viewBox="0 0 34 34"><rect width="34" height="34" rx="8" fill="#fff"/><rect x="9" y="6" width="19" height="22" rx="1.500" fill="#18874e"/><path d="M18 6h10v7H18z" fill="#35c481"/><path d="M18 13h10v7H18z" fill="#20a366"/><path d="M9 20h9v8H9z" fill="#155c38"/><rect x="3" y="10" width="13" height="13" rx="1.500" fill="#107c41"/><path d="M7 13l5 7M12 13l-5 7" stroke="#fff" stroke-width="1.800"/></svg></a>
  <a class="slot run" href="#" aria-label="Activity Monitor"><svg viewBox="0 0 34 34"><rect width="34" height="34" rx="8" fill="#a7b5bd"/><rect x="1" y="1" width="32" height="32" rx="7" fill="#050808"/><rect x="3" y="3" width="28" height="28" rx="5" fill="#16211f"/><path d="M10 3v28M17 3v28M24 3v28M3 10h28M3 17h28M3 24h28" stroke="#34504b" stroke-width=".7"/><path d="M3 19h4l1.500-2L10 24l1-19 1 17 1.500-3h3l2 1 2-4 2 3 2-1 2 1h4" fill="none" stroke="#54d2c5"/></svg></a>
  <a class="slot run" href="#" aria-label="Zoom"><svg viewBox="0 0 34 34"><rect width="34" height="34" rx="8" fill="url(#gZoom)"/><text x="17" y="20" class="t-zoom">zoom</text></svg></a>
  <span class="dock-rule"></span>
  <a class="slot" href="#" aria-label="Trash"><svg viewBox="0 0 34 34"><path d="M2 0h30l-3 32q-1 4-12 4T5 32z" fill="#d8d8db"/><path d="M5 5l5 28 6-8 5 9 7-29-9 7z" fill="#ececee"/><ellipse cx="17" cy="1" rx="15" ry="3.500" fill="#f5f5f5"/><path d="M4 1l4-3 4 1 4-2 4 2 4-1 6 3q-4 3-13 3T4 1z" fill="#62646b"/><path d="M8 2l3-3 3 3zM19 0l4-2 1 4zM26-1l3 1-2 2z" fill="#eee"/><path d="M14-1l3 3-4 1zM24 0l3 1-3 2z" fill="#2d82a4"/></svg></a>
</nav>
</body>
</html>
```
FILE: styles.css
```css
* { box-sizing: border-box; }

body {
  margin: 0;
  min-height: 100vh;
  display: flex;
  flex-direction: column;
  font-family: Inter, "Liberation Sans", sans-serif;
  font-size: 12px;
  color: #3c4043;
  background: linear-gradient(90deg, #150038 0%, #20005c 45%, #27006c 64%, #6500a8 67%, #50009a 85%, #35007a 100%);
}

button {
  font: inherit;
  color: inherit;
  border: 0;
  padding: 0;
  background: none;
  display: flex;
  align-items: center;
  justify-content: center;
}

a { color: inherit; text-decoration: none; }
.defs { position: absolute; }

/* Menu bar */
.menubar {
  height: 24px;
  margin-bottom: 1px;
  padding: 0 19px;
  display: flex;
  justify-content: space-between;
  align-items: center;
  font-size: 13px;
  font-weight: 500;
  color: #fff;
  text-shadow: 0 1px 2px rgba(60, 0, 70, .3);
  background: linear-gradient(90deg, #a51db2, #bf39c0 38%, #c23bc1 62%, #b41cb2 85%, #b018af);
}
.menus, .status { display: flex; align-items: center; }
.menus { gap: 20px; }
.status { gap: 18px; }
.app { font-weight: 700; }
.clock { display: flex; gap: 11px; }

/* Browser window */
.window {
  flex: 1;
  display: flex;
  flex-direction: column;
  overflow: hidden;
  border-radius: 10px;
  background: #fff;
}
.tabstrip {
  height: 42px;
  padding-top: 8px;
  display: flex;
  background: #dee1e8;
}
.lights { width: 94px; padding: 7px 0 0 21px; display: flex; gap: 8px; }
.light { width: 12px; height: 12px; border-radius: 50%; }
.red { background: #fe3b43; border: 1px solid #e2323a; }
.yellow { background: #fdb908; border: 1px solid #e0a106; }
.green { background: #04d13f; border: 1px solid #04b536; }
.tab {
  flex: 0 1 239px;
  min-width: 0;
  padding: 0 8px 2px 11px;
  display: flex;
  align-items: center;
  gap: 8px;
  background: linear-gradient(#80868b, #80868b) right 7px / 1px 20px no-repeat;
}
.tab.last { background: none; }
.tab.active { border-radius: 8px 8px 0 0; background: #fff; }
.fav { width: 16px; height: 16px; flex: none; }
.blue { color: #2f74f4; fill: #2f74f4; }
.tab-title { flex: 1; min-width: 0; overflow: hidden; white-space: nowrap; line-height: 16px; }
.fade { overflow: visible; -webkit-mask-image: linear-gradient(90deg, #000 85%, transparent); mask-image: linear-gradient(90deg, #000 85%, transparent); margin-right: -6px; }
.tab-close svg { width: 16px; height: 16px; }
.newtab { width: 44px; }
.tabsearch { width: 44px; margin-left: auto; }

.toolbar {
  height: 36px;
  padding: 0 8px 0 6px;
  display: flex;
  align-items: center;
}
.tool { width: 32px; height: 28px; flex: none; }
.omnibox {
  flex: 1;
  height: 28px;
  margin: 0 6px;
  padding: 0 2px 0 12px;
  display: flex;
  align-items: center;
  border-radius: 14px;
  background: #f1f3f4;
}
.url {
  flex: 1;
  min-width: 0;
  margin-left: 10px;
  padding: 0;
  border: 0;
  font: 14px/20px Inter, "Liberation Sans", sans-serif;
  color: #5f6368;
  -webkit-text-fill-color: transparent;
  background: linear-gradient(90deg, #202124 75px, #5f6368 75px);
  -webkit-background-clip: text;
  background-clip: text;
}
.wheel {
  width: 14px;
  height: 14px;
  border-radius: 50%;
  background: conic-gradient(#e00 0 8%, #f07 8% 17%, #e0f 17% 30%, #50f 30% 42%, #06f 42% 52%, #0df 52% 62%, #0e5 62% 75%, #7e0 75% 84%, #fe0 84% 92%, #f70 92%);
}
.avatar {
  width: 22px;
  height: 22px;
  border-radius: 50%;
  background: #bb00bd;
  color: #fff;
  line-height: 22px;
}
.update {
  width: 88px;
  height: 28px;
  margin-left: 2px;
  padding-left: 2px;
  gap: 16px;
  border: 1px solid #0b8043;
  border-radius: 14px;
  background: #e8f3ec;
  color: #0b8043;
  font-size: 13px;
}

.bookmarks {
  height: 33px;
  padding: 0 14px 6px;
  display: flex;
  align-items: center;
  gap: 16px;
  border-bottom: 1px solid #dadce0;
  white-space: nowrap;
}
.bookmarks a { display: flex; align-items: center; gap: 8px; }
.bookmarks svg { width: 16px; height: 16px; }

/* Sitemap editor */
.page {
  position: relative;
  flex: 1;
  display: flex;
  flex-direction: column;
}
.page::after {
  content: "";
  position: absolute;
  inset: auto 0 0;
  height: 44px;
  pointer-events: none;
  background: linear-gradient(transparent, rgba(0, 0, 0, .14));
  -webkit-mask-image: linear-gradient(90deg, transparent 1%, #000 7%, #000 93%, transparent 99%);
  mask-image: linear-gradient(90deg, transparent 1%, #000 7%, #000 93%, transparent 99%);
}
.page-head {
  padding: 16px;
  display: grid;
  grid-template-columns: 1fr auto 1fr;
  align-items: center;
}
.brand { padding-left: 7px; display: flex; align-items: center; gap: 13px; }
.logo { color: #b833ea; fill: #b833ea; }
h1 { margin: 0; font-size: 16px; line-height: 20px; font-weight: 800; color: #2f74f4; }
.trial {
  height: 28px;
  padding: 0 16px 2px;
  gap: 4px;
  border-radius: 14px;
  background: #738baa;
  color: #fff;
  white-space: nowrap;
}
.actions, .group { display: flex; align-items: center; gap: 8px; }
.actions { justify-content: flex-end; }
.pill {
  height: 36px;
  border-radius: 18px;
  background: #e9edf5;
  color: #738baa;
  font-size: 16px;
}
.pill svg { width: 16px; height: 16px; fill: none; stroke: #738baa; stroke-width: 1.4; }
.round { width: 36px; }
.share { width: 80px; background: #f2f6fc; color: #bccbe0; }
.faint { background: #f2f6fc; }
.faint svg { stroke: #b4c5dc; }
.rule { width: 1px; height: 16px; background: #dde5f0; }
.actions > .rule, .group > .rule { margin: 0 4px; }

.canvas { position: relative; flex: 1; min-height: 400px; }
.diagram {
  position: absolute;
  top: 33px;
  left: calc(50% - 326px);
  width: 594px;
  height: 301px;
}
.links { position: absolute; top: 0; left: 0; }
.node {
  position: absolute;
  width: 264px;
  border: 2px solid #3f7ff5;
  border-radius: 5px;
  background: #fff;
}
.root { top: 0; left: 165px; }
.left { top: 177px; left: 0; }
.right { top: 177px; left: 330px; }
.node-bar {
  height: 15px;
  padding-left: 5px;
  display: flex;
  align-items: center;
  gap: 3px;
  border-bottom: 2px solid #3f7ff5;
}
.node-bar i { width: 5px; height: 5px; border-radius: 50%; background: #2f74f4; }
.node h2 { margin: 12px 13px; font-size: 24px; line-height: 28px; font-weight: 700; color: #2f74f4; }
.node p {
  margin: 0 13px 13px;
  padding: 0 10px;
  border-radius: 4px;
  background: #2f74f4;
  color: #fff;
  font-size: 20px;
  line-height: 40px;
}

.page-foot { padding: 0 16px 20px; display: flex; justify-content: space-between; }
.about { padding: 0 10px 0 14px; display: flex; align-items: center; gap: 10px; }
.about svg { width: 18px; }
.zoom { width: 78px; }
.fit { width: 54px; }
.help { font-weight: 500; }
.add {
  position: absolute;
  left: calc(50% - 59px);
  bottom: 47px;
  width: 60px;
  height: 60px;
  border: 2px solid #e4ecf7;
  border-radius: 50%;
  background: #fff;
}
.cookies {
  position: absolute;
  bottom: 0;
  left: 50%;
  width: 420px;
  height: 31px;
  margin-left: -210px;
  padding-bottom: 2px;
  display: flex;
  align-items: center;
  justify-content: center;
  gap: 3px;
  border: 1px solid #2f74f4;
  border-bottom: 0;
  border-radius: 5px 5px 0 0;
  background: #fff;
  color: #2f6fe6;
  white-space: nowrap;
}
.cookies a { text-decoration: underline; text-underline-offset: 2px; }
.agree { margin-left: 8px; gap: 2px; font-weight: 700; }

/* Dock */
.dock {
  height: 53px;
  margin: 2px 35px 5px;
  padding: 0 2px;
  display: flex;
  border: 1px solid rgba(255, 255, 255, .25);
  border-radius: 16px;
  background: linear-gradient(90deg, #68548d, #6c5498 24%, #8056bf 50%, #a855dd 63%, #b956ee 72%, #a455df 82%, #8556c7);
}
.slot {
  position: relative;
  flex: 1;
  min-width: 0;
  padding-top: 7px;
  display: flex;
  flex-direction: column;
  align-items: center;
  gap: 5px;
}
.slot svg { width: 34px; height: 34px; flex: none; overflow: visible; }
.slot .clip { overflow: hidden; border-radius: 8px; }
.run::after { content: ""; width: 4px; height: 4px; border-radius: 50%; background: #14032f; }
.dock-rule { width: 20px; margin: 7px 0; background: linear-gradient(#62339b, #62339b) center / 1px 100% no-repeat; }
.badge {
  position: absolute;
  top: 3px;
  right: 0;
  width: 16px;
  height: 16px;
  border-radius: 50%;
  background: #f51217;
  color: #fff;
  font-size: 9px;
  line-height: 16px;
  font-weight: 500;
  text-align: center;
}
.t-mono { font: 700 9px "Liberation Mono", monospace; fill: #fff; }
.t-month { font: 700 7px Inter, sans-serif; fill: #fff; text-anchor: middle; }
.t-day { font: 400 20px Inter, sans-serif; fill: #222; text-anchor: middle; }
.t-tv { font: 500 14px Inter, sans-serif; fill: #fff; }
.t-zoom { font: 600 9px Inter, sans-serif; fill: #fff; text-anchor: middle; }
```
